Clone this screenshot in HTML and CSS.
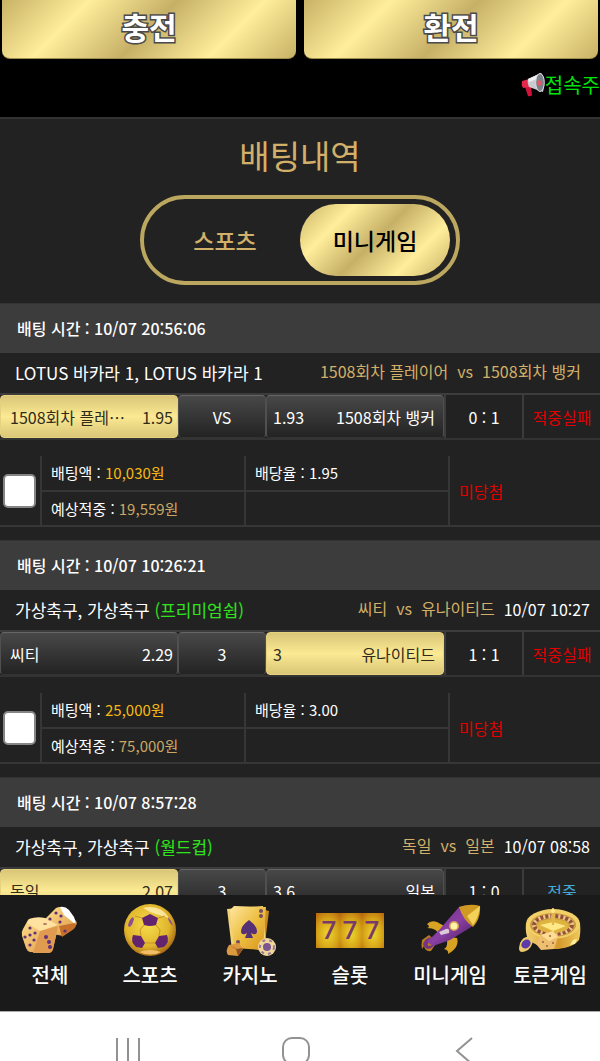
FILE: index.html
```html
<!DOCTYPE html>
<html lang="ko">
<head>
<meta charset="utf-8">
<meta name="viewport" content="width=device-width, initial-scale=1">
<title>배팅내역</title>
<link rel="stylesheet" href="styles.css">
</head>
<body>
<header class="top">
  <div class="wallet">
    <button class="wallet-btn" type="button">충전</button>
    <button class="wallet-btn" type="button">환전</button>
  </div>
  <div class="notice">
    <svg class="horn" viewBox="0 0 24 24" aria-hidden="true">
      <path d="M4 14l6-1 1 9q-1 2-4 1z" fill="#d3123b"/>
      <path d="M1 8q-1 4 1 7l7-1-1-8z" fill="#e5294d"/>
      <path d="M7 6L20 0q5 7 2 19L8 14q-2-4-1-8z" fill="#c9cbd0"/>
      <path d="M7 6L20 0l1 4-13 5z" fill="#f0f0f2"/>
      <ellipse cx="19" cy="9.500" rx="4.300" ry="9" fill="#7c8088" stroke="#dcdde0"/>
      <ellipse cx="18" cy="10" rx="2.200" ry="2.800" fill="#e8566b"/>
    </svg>
    <span>접속주</span>
  </div>
</header>

<main class="content">
  <h1 class="title">배팅내역</h1>
  <div class="switch">
    <button class="switch-btn" type="button">스포츠</button>
    <button class="switch-btn is-on" type="button">미니게임</button>
  </div>

  <section class="slip">
    <h2 class="slip-time">배팅 시간 : 10/07 20:56:06</h2>
    <div class="match">
      <span class="league">LOTUS 바카라 1, LOTUS 바카라 1</span>
      <span class="teams wide"><span>1508회차 플레이어</span><span>vs</span><span>1508회차 뱅커</span></span>
    </div>
    <div class="odds">
      <button class="pick is-picked" type="button"><span class="name">1508회차 플레…</span><span>1.95</span></button>
      <button class="pick mid" type="button">VS</button>
      <button class="pick away" type="button"><span>1.93</span><span>1508회차 뱅커</span></button>
      <span class="score">0 : 1</span>
      <span class="score lose">적중실패</span>
    </div>
    <table class="bet">
      <colgroup><col class="c-check"><col class="c-money"><col class="c-money"><col></colgroup>
      <tr>
        <td rowspan="2" class="check"><input class="box" type="checkbox" aria-label="10/07 20:56:06 배팅 선택"></td>
        <td>배팅액 : <span class="stake">10,030원</span></td>
        <td>배당율 : 1.95</td>
        <td rowspan="2" class="lose">미당첨</td>
      </tr>
      <tr><td>예상적중 : <span class="gain">19,559원</span></td><td></td></tr>
    </table>
  </section>

  <section class="slip">
    <h2 class="slip-time">배팅 시간 : 10/07 10:26:21</h2>
    <div class="match">
      <span class="league">가상축구, 가상축구 <span class="cup">(프리미엄쉽)</span></span>
      <span class="teams"><span>씨티</span><span>vs</span><span>유나이티드</span></span>
      <time class="kickoff">10/07 10:27</time>
    </div>
    <div class="odds">
      <button class="pick" type="button"><span class="name">씨티</span><span>2.29</span></button>
      <button class="pick mid" type="button">3</button>
      <button class="pick away is-picked" type="button"><span>3</span><span>유나이티드</span></button>
      <span class="score">1 : 1</span>
      <span class="score lose">적중실패</span>
    </div>
    <table class="bet">
      <colgroup><col class="c-check"><col class="c-money"><col class="c-money"><col></colgroup>
      <tr>
        <td rowspan="2" class="check"><input class="box" type="checkbox" aria-label="10/07 10:26:21 배팅 선택"></td>
        <td>배팅액 : <span class="stake">25,000원</span></td>
        <td>배당율 : 3.00</td>
        <td rowspan="2" class="lose">미당첨</td>
      </tr>
      <tr><td>예상적중 : <span class="gain">75,000원</span></td><td></td></tr>
    </table>
  </section>

  <section class="slip">
    <h2 class="slip-time">배팅 시간 : 10/07 8:57:28</h2>
    <div class="match">
      <span class="league">가상축구, 가상축구 <span class="cup">(월드컵)</span></span>
      <span class="teams"><span>독일</span><span>vs</span><span>일본</span></span>
      <time class="kickoff">10/07 08:58</time>
    </div>
    <div class="odds">
      <button class="pick is-picked" type="button"><span class="name">독일</span><span>2.07</span></button>
      <button class="pick mid" type="button">3</button>
      <button class="pick away" type="button"><span>3.6</span><span>일본</span></button>
      <span class="score">1 : 0</span>
      <span class="score win">적중</span>
    </div>
  </section>
</main>

<nav class="tabs">
  <a class="tab" href="#all">
    <svg class="tab-icon" viewBox="0 0 70 54" aria-hidden="true">
      <defs><linearGradient id="die" x1="0" y1="0" x2="1" y2="1"><stop offset="0" stop-color="#ffe08a"/><stop offset="1" stop-color="#dc9548"/></linearGradient></defs>
      <path d="M30 15L41 4q4-2 8 0l12 13q2 3-1 5L48 32l-10-2z" fill="url(#die)"/>
      <path d="M45 3q5-1 9 3l5 7q2 4 1 7L49 11z" fill="#fff"/>
      <path d="M44 22l16-3 1 2q0 3-5 6l-9 6z" fill="#c5702b"/>
      <path d="M13 16q2-2 5-1l22 4q4 1 3 5l-5 21q-1 4-5 4l-18-1q-3-1-4-4L7 32q-1-4 1-7z" fill="url(#die)"/>
      <path d="M25 27l18-5-5 23q-1 4-5 4H18z" fill="#e19b51"/>
      <path d="M14 15q8-3 16-1l13 7-18 6-13-8z" fill="#ffe2a0"/>
      <g fill="#64307b"><circle cx="15" cy="24" r="1.600"/><circle cx="20" cy="29" r="1.600"/><circle cx="15" cy="31" r="1.600"/><circle cx="10" cy="33" r="1.600"/><circle cx="19" cy="36" r="1.600"/><circle cx="15" cy="41" r="1.600"/><circle cx="31" cy="33" r="2"/><circle cx="34" cy="38" r="2"/><circle cx="35" cy="43" r="2"/><circle cx="41" cy="9" r="1.600"/><circle cx="46" cy="12" r="1.600"/><circle cx="35" cy="15" r="1.600"/><circle cx="45" cy="18" r="1.600"/><circle cx="50" cy="27" r="1.600"/></g>
      <ellipse cx="30" cy="20" rx="2" ry="1" fill="#a97865"/>
    </svg>전체</a>
  <a class="tab" href="#sports">
    <svg class="tab-icon" viewBox="0 0 70 54" aria-hidden="true">
      <defs><radialGradient id="ball" cx=".45" cy=".4" r=".6"><stop offset="0" stop-color="#f7dc4d"/><stop offset=".7" stop-color="#e0b52c"/><stop offset="1" stop-color="#a96d17"/></radialGradient></defs>
      <circle cx="35" cy="26" r="26" fill="url(#ball)"/>
      <path d="M28 4q17-4 26 10l-7-2-12-4z" fill="#fff0b5" opacity=".8"/>
      <g fill="#63246d"><path d="M35 10l8 4-2 7q-6 2-12 0l-2-7z"/><path d="M18 31l8 1 4 7-3 5-6-1q-6-5-3-12z"/><path d="M52 31l-8 1-4 7 3 5 6-1q6-5 3-12z"/></g>
      <path d="M13 22q1-7 5-9l1 2q-1 5-4 8zM53 13q4 4 5 9l-3-3q-2-3-2-6z" fill="#8b4f91"/>
      <path d="M29 21l-4 5 1 6m15-11l4 5-1 6M30 39h10M27 14l-7-2m23 2l7-2" fill="none" stroke="#c79428"/>
      <path d="M24 48q11-4 22 0-10 5-22 0z" fill="#f2bd68"/>
    </svg>스포츠</a>
  <a class="tab" href="#casino">
    <svg class="tab-icon" viewBox="0 0 70 54" aria-hidden="true">
      <defs><linearGradient id="card" x1="0" y1="0" x2="1" y2="1"><stop offset="0" stop-color="#ffe6a0"/><stop offset=".5" stop-color="#edc044"/><stop offset="1" stop-color="#d9931b"/></linearGradient></defs>
      <path d="M42 4l12 3-5 40-13-3z" fill="#c78a21"/>
      <path d="M12 5l36-3 3 38-34 6z" fill="#f3d376"/>
      <path d="M19 2l32 1-3 43-29-2-4-38z" fill="url(#card)"/>
      <path d="M34 16q8 6 8 11 0 4-4 3l-2-1 2 5h-8l2-5-2 1q-4 1-4-3 0-5 8-11z" fill="#563074"/>
      <circle cx="46" cy="7" r="2" fill="#744b62"/><circle cx="46" cy="12" r="2" fill="#744b62"/><circle cx="23" cy="38" r="2" fill="#744b62"/>
      <path d="M14 41l10-2 4 6-5 7-10-1q-3-4 1-10z" fill="#dc9940"/><path d="M14 41l8 4 6-1-5 8-2-7z" fill="#8d5020"/>
      <circle cx="52" cy="43" r="9" fill="#f0d69a"/><circle cx="52" cy="43" r="7" fill="none" stroke="#9b7a98" stroke-width="2" stroke-dasharray="3 4"/><circle cx="52" cy="43" r="4" fill="#7b558e"/>
    </svg>카지노</a>
  <a class="tab" href="#slot">
    <svg class="tab-icon" viewBox="0 0 70 54" aria-hidden="true">
      <defs><radialGradient id="reel" cx=".5" cy=".6" r=".75"><stop offset="0" stop-color="#efd62e"/><stop offset=".6" stop-color="#d4a117"/><stop offset="1" stop-color="#b9680d"/></radialGradient></defs>
      <path d="M1 9h24v35H1z" fill="url(#reel)"/><path d="M25 9h22v35H25z" fill="url(#reel)"/><path d="M47 9h22v35H47z" fill="url(#reel)"/>
      <g class="sevens"><text x="14" y="35">7</text><text x="35" y="35">7</text><text x="57" y="35">7</text></g>
    </svg>슬롯</a>
  <a class="tab" href="#mini">
    <svg class="tab-icon" viewBox="0 0 70 54" aria-hidden="true">
      <defs><linearGradient id="hull" x1="0" y1="0" x2="1" y2="1"><stop offset="0" stop-color="#6b2a82"/><stop offset=".5" stop-color="#8a40a3"/><stop offset="1" stop-color="#3d1754"/></linearGradient></defs>
      <path d="M12 20q4-4 10-2l9 5-7 9q-1-8-12-8 4-1 0-4zM36 33l6 1q3 9-9 16 1-4-4-5 4-2 3-9z" fill="#d8a323"/>
      <path d="M14 31l-7 5q-1 5 0 9l2-3q1 6 7 5l6-9z" fill="#b87b24"/>
      <path d="M8 40q2-6 9-7-5 4-4 9 5 0 8-4-2 6-8 7-4-1-5-5z" fill="#723582"/>
      <path d="M12 38l13-13L44 3q5-2 9-1l9 13q-3 7-9 10L35 36l-17 6z" fill="url(#hull)"/>
      <path d="M44 3q12-4 21-1 1 12-7 21-10-7-14-20z" fill="#d09a22"/><path d="M65 2q-1 11-7 19l-6-9z" fill="#f4d259"/>
      <path d="M24 28l7-3q4-1 3 4l-8 2z" fill="#dacbd8"/>
      <circle cx="39" cy="22" r="5" fill="#d59a5a"/><circle cx="39" cy="22" r="3.500" fill="#fff3a4"/>
    </svg>미니게임</a>
  <a class="tab" href="#token">
    <svg class="tab-icon" viewBox="0 0 70 54" aria-hidden="true">
      <defs><linearGradient id="wheel" x1="0" y1="0" x2="1" y2="0"><stop offset="0" stop-color="#f3d16e"/><stop offset=".6" stop-color="#d5982c"/><stop offset="1" stop-color="#efc95d"/></linearGradient></defs>
      <path d="M11 19q-1 10 2 16 12 11 30 10 16-2 21-9 2-7 1-17z" fill="url(#wheel)"/>
      <ellipse cx="38" cy="20" rx="27" ry="15" fill="#f2cf67"/><ellipse cx="38" cy="21" rx="23" ry="12" fill="#c99a3a"/>
      <ellipse cx="38" cy="21" rx="19" ry="9" fill="none" stroke="#e9c98c" stroke-width="4"/>
      <ellipse cx="38" cy="21" rx="19" ry="9" fill="none" stroke="#965038" stroke-width="4" stroke-dasharray="3 2"/>
      <ellipse cx="38" cy="22" rx="16" ry="7" fill="#dfb340"/><path d="M25 21l13-3 13 4-13 5z" fill="#ffe986"/>
      <path d="M37 4h2l1 9-1 8h-2l-1-8z" fill="#e1b64e"/><circle cx="38" cy="7" r="2" fill="#ffe98a"/>
      <path d="M26 31l12-4 5 6-4 12-13 1-5-6z" fill="#eebf6e"/><path d="M26 31l8 6 9-4-5-6z" fill="#ffdc93"/>
      <path d="M5 39q4-8 12-6 3 6-4 13-9 5-9-2z" fill="#edc96d"/><ellipse cx="11" cy="40" rx="5" ry="4" fill="#5d3aa5" transform="rotate(-38 11 40)"/>
      <g fill="#a16045"><circle cx="28" cy="38" r="1"/><circle cx="32" cy="42" r="1"/><circle cx="38" cy="39" r="1"/><circle cx="35" cy="32" r="1"/></g>
      <path d="M55 41l3-5 4-1-2 5z" fill="#fff0a0"/>
    </svg>토큰게임</a>
</nav>

<footer class="system">
  <button class="sys-btn" type="button" aria-label="최근 앱"><svg class="sys-icon" viewBox="0 0 30 30"><path d="M4 1v28M15 1v28M26 1v28"/></svg></button>
  <button class="sys-btn" type="button" aria-label="홈"><svg class="sys-icon" viewBox="0 0 30 30"><rect x="2" y="1" width="26" height="26" rx="9"/></svg></button>
  <button class="sys-btn" type="button" aria-label="뒤로"><svg class="sys-icon" viewBox="0 0 30 30"><path d="M22 1L7 14l15 13"/></svg></button>
</footer>
</body>
</html>
```
FILE: styles.css
```css
* { box-sizing: border-box; }
body {
  margin: 0;
  height: 100vh;
  display: flex;
  flex-direction: column;
  overflow: hidden;
  background: #222;
  color: #fff;
  font: 400 17px/24px "Noto Sans CJK KR", sans-serif;
}
button {
  margin: 0;
  padding: 0;
  border: 0;
  background: none;
  color: inherit;
  font: inherit;
  cursor: pointer;
}

.top { flex: none; background: #000; border-bottom: 2px solid #333; }
.wallet { display: grid; grid-template-columns: 1fr 1fr; gap: 8px; padding: 0 2px; }
.wallet-btn {
  height: 59px;
  padding-bottom: 6px;
  border-radius: 0 0 8px 8px;
  background: linear-gradient(135deg, #c8b165 0%, #ffee9b 25%, #c6b067 50%, #ffee9b 75%, #c8b165 100%);
  border-bottom: 1px solid #a28f50;
  font-size: 30px;
  line-height: 44px;
  font-weight: 700;
  -webkit-text-stroke: 3px #4a4a4a;
  paint-order: stroke fill;
}
.notice {
  display: flex;
  align-items: center;
  justify-content: flex-end;
  height: 58px;
  padding-bottom: 6px;
  color: #00e60b;
  font-size: 20px;
}
.horn { width: 24px; height: 24px; }

.content { flex: 1; min-height: 0; overflow: hidden; }
.title {
  margin: 0;
  padding-top: 12px;
  text-align: center;
  color: #d3b069;
  font-size: 33px;
  line-height: 48px;
  font-weight: 400;
}
.switch {
  display: grid;
  grid-template-columns: 1fr 1fr;
  width: 320px;
  height: 90px;
  margin: 16px auto 18px;
  padding: 5px 6px;
  border: 4px solid #bba75f;
  border-radius: 45px;
}
.switch-btn {
  border-radius: 37px;
  color: #d3b069;
  font-size: 23px;
  font-weight: 500;
}
.switch-btn.is-on {
  background: linear-gradient(135deg, #c8b165 0%, #ffee9b 25%, #c6b067 50%, #ffee9b 75%, #c8b165 100%);
  color: #000;
}

.slip { margin-bottom: 13px; }
.slip-time {
  margin: 0;
  padding: 12px 17px;
  border-top: 1px solid #333;
  background: #3c3c3c;
  font-size: 16px;
  line-height: 25px;
  font-weight: 500;
}
.match {
  display: flex;
  align-items: center;
  gap: 9px;
  height: 40px;
  padding: 0 10px 0 15px;
}
.league { flex: 1; white-space: nowrap; }
.teams { display: flex; gap: 9px; padding-bottom: 5px; color: #d3b069; font-size: 16px; white-space: nowrap; }
.teams.wide { padding-right: 9px; }
.kickoff { padding-bottom: 2px; font-size: 16px; }
.cup { color: #2fe41c; }

.odds {
  display: grid;
  grid-template-columns: 178fr 88fr 178fr 78fr 78fr;
  height: 47px;
  border-top: 2px solid #3c3c3c;
  border-bottom: 2px solid #333;
  font-size: 16px;
}
.pick {
  display: flex;
  align-items: center;
  justify-content: space-between;
  min-width: 0;
  padding: 0 4px 0 9px;
  border: 1px solid #505050;
  border-top-color: #666;
  border-bottom-color: #333;
  border-radius: 4px;
  background: linear-gradient(#484848, #232323);
  white-space: nowrap;
}
.pick.mid { justify-content: center; padding: 0; }
.pick.away { padding: 0 8px 0 6px; }
.pick.is-picked {
  border-color: #e6d17c;
  background: linear-gradient(#dac677, #fbe993 50%, #dac677);
  color: #302c1c;
}
.name { overflow: hidden; text-overflow: ellipsis; }
.score { display: flex; align-items: center; justify-content: center; border-left: 2px solid #3c3c3c; }
.lose { color: #e00000; }
.win { color: #43a9d6; }

.bet {
  width: 100%;
  margin-top: 16px;
  border-collapse: collapse;
  table-layout: fixed;
  font-size: 15px;
  border-bottom: 2px solid #363636;
}
.c-check { width: 41px; }
.c-money { width: 34%; }
.bet td { height: 35px; padding: 0 9px; border-left: 2px solid #363636; border-bottom: 2px solid #363636; }
.bet .check { padding: 0 3px; border-left: 0; }
.bet .lose { font-size: 16px; }
.box {
  display: block;
  width: 33px;
  height: 34px;
  margin: 0;
  appearance: none;
  border: 2px solid #858585;
  border-radius: 5px;
  background: #fff;
}
.stake { color: #f7b912; }
.gain { color: #c9a765; }

.tabs {
  flex: none;
  display: grid;
  grid-template-columns: repeat(6, 1fr);
  height: 116px;
  padding-top: 9px;
  background: #1a1a1a;
}
.tab {
  display: flex;
  flex-direction: column;
  align-items: center;
  gap: 2px;
  color: #fff;
  font-size: 20px;
  line-height: 30px;
  font-weight: 500;
  text-decoration: none;
  white-space: nowrap;
}
.tab-icon { width: 70px; height: 54px; }
.sevens { fill: #773b69; font: 600 26px "Open Sans", sans-serif; text-anchor: middle; }

.system {
  flex: none;
  display: grid;
  grid-template-columns: repeat(3, 1fr);
  height: 50px;
  padding: 25px 51px 0 44px;
  border-top: 1px solid #aaa;
  background: #fff;
  overflow: hidden;
}
.sys-btn { display: flex; justify-content: center; }
.sys-icon { flex: none; width: 30px; height: 30px; fill: none; stroke: #929292; stroke-width: 2; }
```
